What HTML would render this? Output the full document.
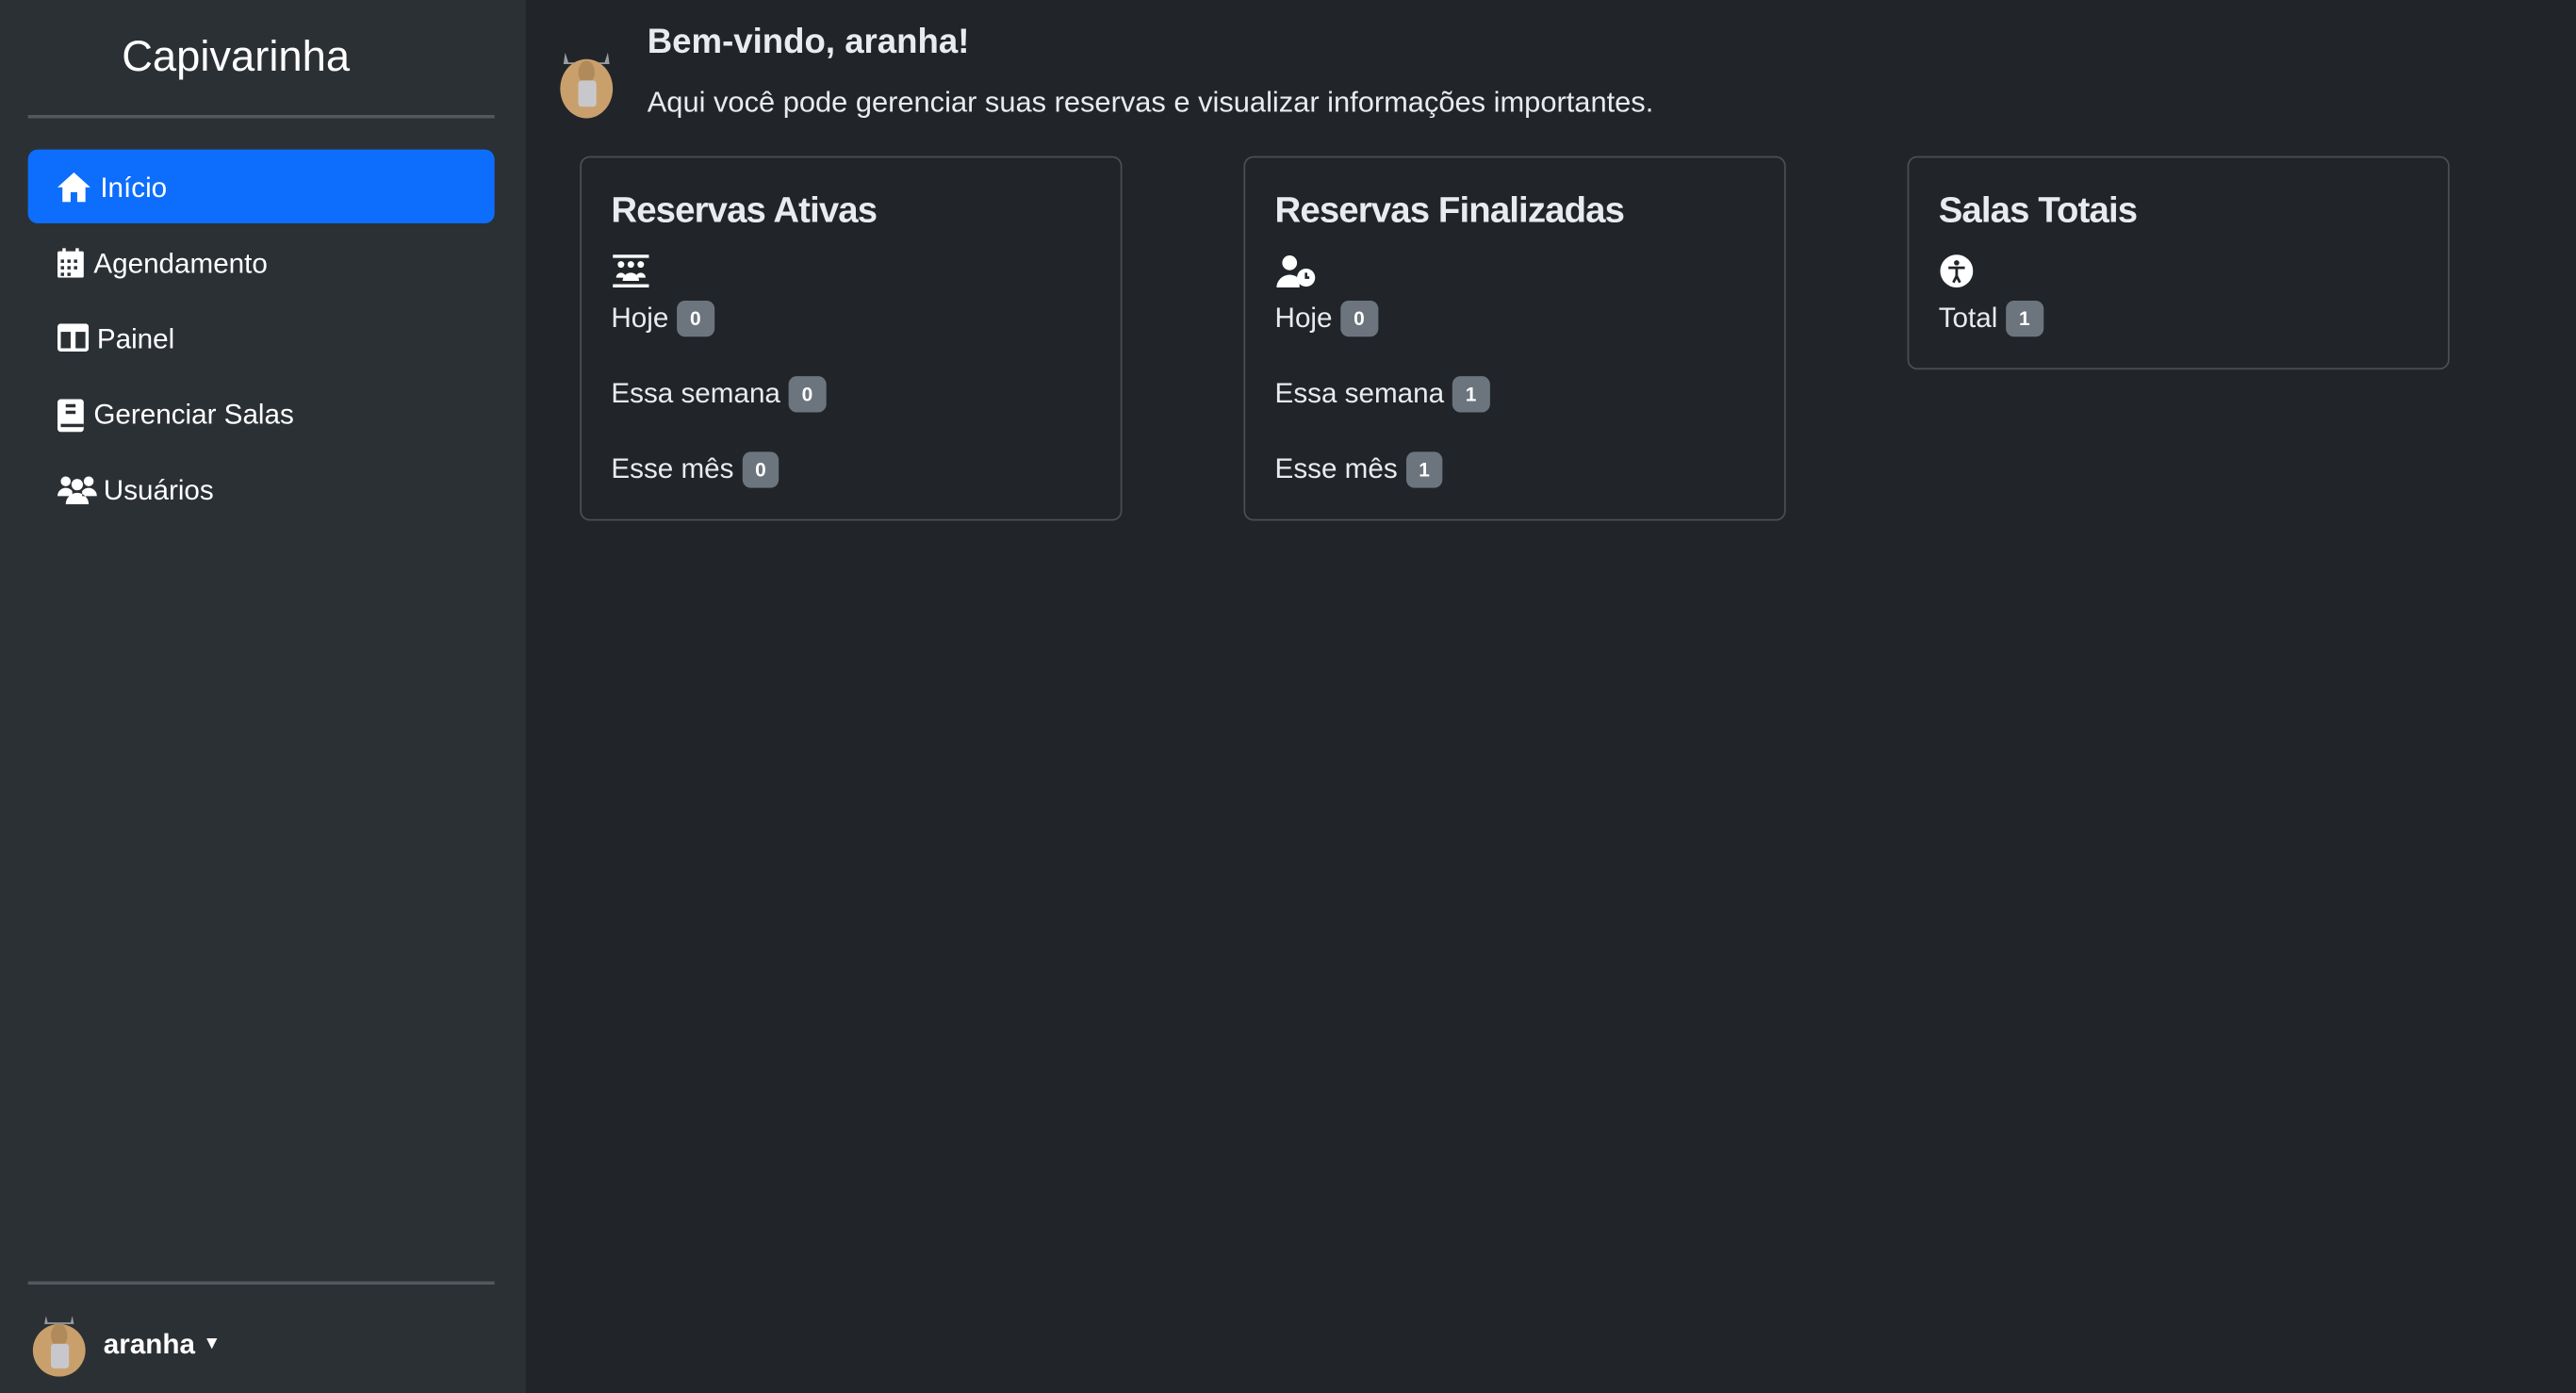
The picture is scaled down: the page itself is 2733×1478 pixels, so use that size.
<!DOCTYPE html>
<html><head><meta charset="utf-8"><style>
html,body{margin:0;padding:0;background:#212529;overflow:hidden}
#w{width:1568px;height:848px;transform:scale(1.74298);transform-origin:0 0;position:relative;font-family:"Liberation Sans",sans-serif;color:#dee2e6}
.sb{position:absolute;left:0;top:0;width:320px;height:848px;background:#2b3035}
.ttl{position:absolute;left:0;width:287px;text-align:center;top:19px;font-size:26px;color:#fff}
.hr{position:absolute;left:17px;width:284px;height:2px;background:#53585d}
.nav{position:absolute;left:17px;width:284px;height:45px;border-radius:6px;font-size:17px;color:#fff;line-height:47px}
.nav svg{position:absolute;left:18px;top:14px}
.nav span{position:absolute;left:40px}
.act{background:#0d6efd}
.card{position:absolute;top:95px;width:328px;border:1px solid #4a4f54;border-radius:6px}
.card h5{position:absolute;left:18px;top:19px;margin:0;font-size:22px;font-weight:bold;color:#e9ecef;letter-spacing:-0.5px}
.row{position:absolute;left:18px;font-size:17px;color:#e9ecef}
.b{display:inline-block;background:#6c757d;color:#fff;font-size:12px;font-weight:bold;border-radius:5px;padding:5px 8px;margin-left:5px;vertical-align:1px;line-height:12px}
.ic{position:absolute;left:19px;top:59px}
</style></head><body><div id="w">
<div class="sb">
<div class="ttl">Capivarinha</div>
<div class="hr" style="top:70px"></div>
<div class="nav act" style="top:91px"><svg width="20" height="18" viewBox="0 0 20 18"><path d="M10 0L0 9h3v9h5v-6h4v6h5V9h3z" fill="#fff"/></svg><span style="left:44px">Início</span></div>
<div class="nav" style="top:137px"><svg width="16" height="18" viewBox="0 0 16 18"><rect x="3" y="0" width="2" height="4" fill="#fff"/><rect x="11" y="0" width="2" height="4" fill="#fff"/><rect x="0" y="2" width="16" height="16" rx="1" fill="#fff"/><g fill="#2b3035"><rect x="2" y="7" width="2" height="2"/><rect x="6" y="7" width="2" height="2"/><rect x="10" y="7" width="2" height="2"/><rect x="2" y="11" width="2" height="2"/><rect x="6" y="11" width="2" height="2"/><rect x="10" y="11" width="2" height="2"/><rect x="2" y="15" width="2" height="2"/><rect x="6" y="15" width="2" height="2"/></g></svg><span>Agendamento</span></div>
<div class="nav" style="top:183px"><svg width="19" height="17" viewBox="0 0 19 17"><rect x="0" y="0" width="19" height="17" rx="2" fill="#fff"/><rect x="2" y="5" width="6" height="10" fill="#2b3035"/><rect x="11" y="5" width="6" height="10" fill="#2b3035"/></svg><span style="left:42px">Painel</span></div>
<div class="nav" style="top:229px"><svg width="16" height="20" viewBox="0 0 16 20"><rect x="0" y="0" width="16" height="20" rx="2" fill="#fff"/><rect x="5" y="3" width="6" height="2" fill="#2b3035"/><rect x="5" y="7" width="6" height="2" fill="#2b3035"/><rect x="2" y="15" width="14" height="2" fill="#2b3035"/></svg><span>Gerenciar Salas</span></div>
<div class="nav" style="top:275px"><svg width="24" height="18" viewBox="0 0 24 18"><circle cx="5" cy="4" r="3" fill="#fff"/><circle cx="19" cy="4" r="3" fill="#fff"/><circle cx="12" cy="6" r="3.5" fill="#fff"/><path d="M0 13a5 5 0 0 1 9-3v3zM24 13a5 5 0 0 0-9-3v3zM5 18a7 7 0 0 1 14 0z" fill="#fff"/></svg><span style="left:46px">Usuários</span></div>
<div class="hr" style="top:780px"></div>
<svg style="position:absolute;left:19px;top:801px" width="34" height="37" viewBox="0 0 34 37"><path d="M9 0l1 4h14l1-4 1 5H8z" fill="#9a9ca0"/><ellipse cx="17" cy="21" rx="16" ry="16" fill="#c9a06c"/><ellipse cx="17" cy="12" rx="5" ry="7" fill="#b08a5a"/><rect x="12" y="17" width="11" height="15" rx="2" fill="#c8c8cc"/></svg>
<div style="position:absolute;left:63px;top:809px;font-size:17px;font-weight:bold;color:#fff">aranha <span style="font-size:11px;vertical-align:3px">▼</span></div>
</div>
<svg style="position:absolute;left:340px;top:32px" width="34" height="40" viewBox="0 0 34 40"><path d="M4 0l2 6h22l2-6 1 7H3z" fill="#9a9ca0"/><ellipse cx="17" cy="22" rx="16" ry="18" fill="#c9a06c"/><ellipse cx="17" cy="12" rx="5" ry="7" fill="#b08a5a"/><rect x="12" y="17" width="11" height="16" rx="2" fill="#c8c8cc"/></svg>
<div style="position:absolute;left:394px;top:14px;font-size:21px;font-weight:bold;color:#e9ecef">Bem-vindo, aranha!</div>
<div style="position:absolute;left:394px;top:52px;font-size:17.7px;color:#e9ecef">Aqui você pode gerenciar suas reservas e visualizar informações importantes.</div>

<div class="card" style="left:353px;height:220px"><h5>Reservas Ativas</h5>
<svg class="ic" width="22" height="20" viewBox="0 0 22 20"><rect x="0" y="0" width="22" height="2" fill="#fff"/><rect x="0" y="18" width="22" height="2" fill="#fff"/><circle cx="5" cy="6" r="2" fill="#fff"/><circle cx="11" cy="6" r="2" fill="#fff"/><circle cx="17" cy="6" r="2" fill="#fff"/><path d="M2 14a3 3 0 0 1 6 0zM14 14a3 3 0 0 1 6 0zM6 16a5 5 0 0 1 10 0z" fill="#fff"/></svg>
<div class="row" style="top:87px">Hoje<span class="b">0</span></div>
<div class="row" style="top:133px">Essa semana<span class="b">0</span></div>
<div class="row" style="top:179px">Esse mês<span class="b">0</span></div></div>

<div class="card" style="left:757px;height:220px"><h5>Reservas Finalizadas</h5>
<svg class="ic" width="24" height="20" viewBox="0 0 24 20"><circle cx="8" cy="5" r="4.5" fill="#fff"/><path d="M0 20a8 8 0 0 1 14-5v5z" fill="#fff"/><circle cx="18" cy="14" r="5.5" fill="#fff"/><path d="M18 11v3h2" stroke="#212529" stroke-width="1.5" fill="none"/></svg>
<div class="row" style="top:87px">Hoje<span class="b">0</span></div>
<div class="row" style="top:133px">Essa semana<span class="b">1</span></div>
<div class="row" style="top:179px">Esse mês<span class="b">1</span></div></div>

<div class="card" style="left:1161px;height:128px"><h5>Salas Totais</h5>
<svg class="ic" width="20" height="20" viewBox="0 0 20 20"><circle cx="10" cy="10" r="10" fill="#fff"/><circle cx="10" cy="5" r="1.6" fill="#212529"/><path d="M5 8h10M10 8v5l-2 4M10 13l2 4" stroke="#212529" stroke-width="1.6" fill="none"/></svg>
<div class="row" style="top:87px">Total<span class="b">1</span></div></div>
</div></body></html>
